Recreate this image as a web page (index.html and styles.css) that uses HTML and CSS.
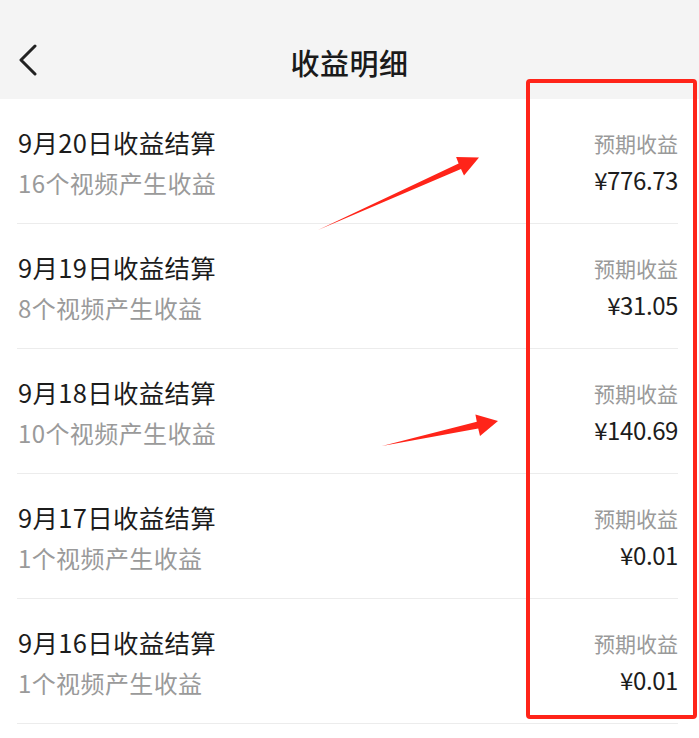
FILE: index.html
```html
<!DOCTYPE html>
<html lang="zh-CN">

<head>
  <meta charset="UTF-8">
  <meta name="viewport" content="width=device-width, initial-scale=1.0">
  <link rel="stylesheet" href="styles.css">
  <title>收益明细</title>
</head>

<body>
  <div class="page">
    <div class="top-bar">
      <svg class="back" width="22" height="32" viewBox="0 0 22 32">
        <polyline points="18,2 4,16 18,30" fill="none" stroke="#222" stroke-width="3" stroke-linecap="round" stroke-linejoin="round" />
      </svg>
      <div class="title">收益明细</div>
    </div>

    <div class="list">
      <div class="row">
        <div class="left">
          <div class="name">9月20日收益结算</div>
          <div class="sub">16个视频产生收益</div>
        </div>
        <div class="right">
          <div class="label">预期收益</div>
          <div class="amount">¥776.73</div>
        </div>
      </div>
      <div class="row">
        <div class="left">
          <div class="name">9月19日收益结算</div>
          <div class="sub">8个视频产生收益</div>
        </div>
        <div class="right">
          <div class="label">预期收益</div>
          <div class="amount">¥31.05</div>
        </div>
      </div>
      <div class="row">
        <div class="left">
          <div class="name">9月18日收益结算</div>
          <div class="sub">10个视频产生收益</div>
        </div>
        <div class="right">
          <div class="label">预期收益</div>
          <div class="amount">¥140.69</div>
        </div>
      </div>
      <div class="row">
        <div class="left">
          <div class="name">9月17日收益结算</div>
          <div class="sub">1个视频产生收益</div>
        </div>
        <div class="right">
          <div class="label">预期收益</div>
          <div class="amount">¥0.01</div>
        </div>
      </div>
      <div class="row">
        <div class="left">
          <div class="name">9月16日收益结算</div>
          <div class="sub">1个视频产生收益</div>
        </div>
        <div class="right">
          <div class="label">预期收益</div>
          <div class="amount">¥0.01</div>
        </div>
      </div>
    </div>

    <!-- 标注：红框和箭头 -->
    <div class="mark-box"></div>
    <svg class="marks" width="699" height="738" viewBox="0 0 699 738">
      <polygon fill="#ff2419" points="318,230 458.6,163.5 456.1,157 479,157.5 464,175.4 461,168.9" />
      <polygon fill="#ff2419" points="382,446 476.8,421.8 475.4,414.4 498,421 480,436 478.2,428.6" />
    </svg>
  </div>
</body>

</html>
```

FILE: styles.css
```css
html,
body {
  margin: 0;
  background: #fff;
}

body {
  font-family: "Noto Sans CJK SC", "Noto Sans", sans-serif;
  color: #1c1c1c;
}

.page {
  position: relative;
  width: 699px;
  height: 738px;
  overflow: hidden;
}

.top-bar {
  position: relative;
  height: 99px;
  background: #f4f4f4;
  display: flex;
  align-items: center;
  justify-content: center;
  padding-top: 24px;
  box-sizing: border-box;
}

.back {
  position: absolute;
  left: 17px;
  top: 44px;
}

.title {
  font-size: 29px;
  font-weight: 500;
  color: #1a1a1a;
  line-height: 40px;
  letter-spacing: 0.5px;
}

.list {
  padding: 0 21px 0 17px;
}

.row {
  height: 124px;
  border-bottom: 1px solid #ececec;
  display: flex;
  justify-content: space-between;
}

.left {
  padding-top: 26px;
  padding-left: 1px;
}

.name {
  font-size: 25.5px;
  line-height: 34px;
  color: #1c1c1c;
  letter-spacing: 0.3px;
}

.sub {
  margin-top: 7px;
  font-size: 24px;
  line-height: 34px;
  color: #9a9a9a;
  letter-spacing: 0.4px;
}

.right {
  padding-top: 26px;
  text-align: right;
}

.label {
  margin-top: 3px;
  font-size: 21px;
  line-height: 30px;
  color: #9a9a9a;
}

.amount {
  margin-top: 5px;
  font-size: 24px;
  line-height: 34px;
  color: #1c1c1c;
  letter-spacing: -0.4px;
}

.mark-box {
  position: absolute;
  left: 526px;
  top: 79px;
  width: 163px;
  height: 632px;
  border: 4px solid #ff2419;
  border-radius: 4px;
}

.marks {
  position: absolute;
  left: 0;
  top: 0;
  pointer-events: none;
}
```
